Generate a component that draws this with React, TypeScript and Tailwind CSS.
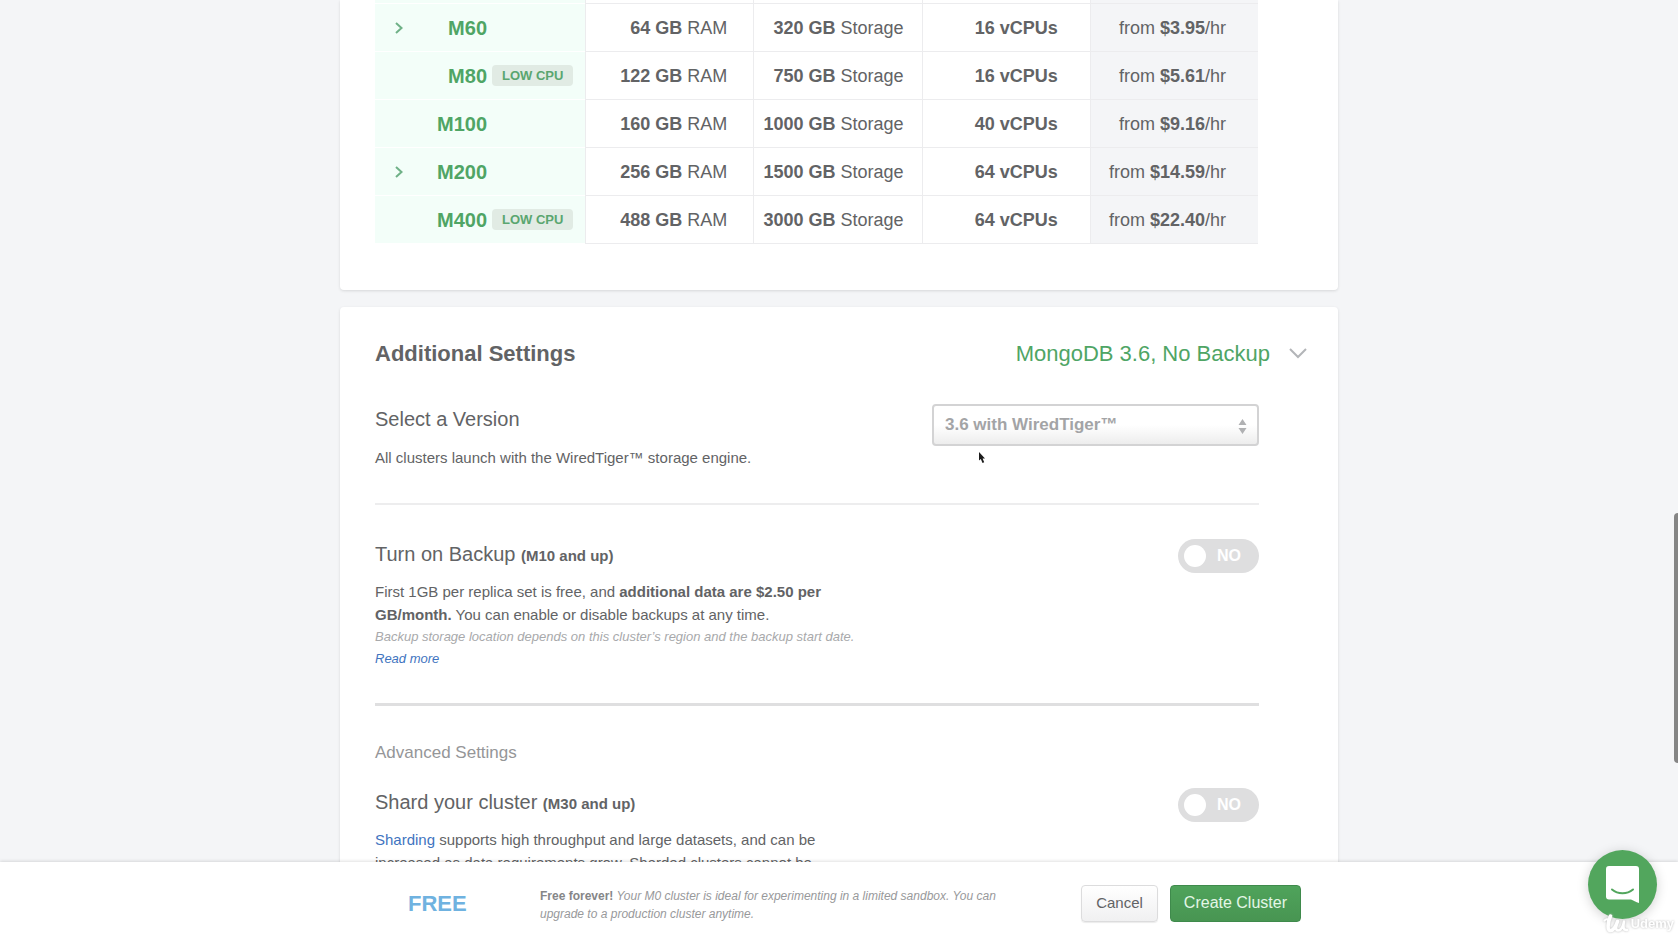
import type { ReactNode } from 'react';

type Tier = {
  name: string;
  expandable?: boolean;
  lowCpu?: boolean;
  ram: string;
  storage: string;
  cpus: string;
  price: string;
};

const tiers: Tier[] = [
  { name: 'M60', expandable: true, ram: '64 GB', storage: '320 GB', cpus: '16 vCPUs', price: '$3.95' },
  { name: 'M80', lowCpu: true, ram: '122 GB', storage: '750 GB', cpus: '16 vCPUs', price: '$5.61' },
  { name: 'M100', ram: '160 GB', storage: '1000 GB', cpus: '40 vCPUs', price: '$9.16' },
  { name: 'M200', expandable: true, ram: '256 GB', storage: '1500 GB', cpus: '64 vCPUs', price: '$14.59' },
  { name: 'M400', lowCpu: true, ram: '488 GB', storage: '3000 GB', cpus: '64 vCPUs', price: '$22.40' },
];

function TierRow({ tier }: { tier: Tier }) {
  return (
    <tr className="h-12">
      <th scope="row" className="border-b border-white bg-[#f3fef9] p-0 font-bold">
        <div className="flex items-center">
          <span className="flex w-10 justify-end pr-3">
            {tier.expandable && (
              <button type="button" aria-label={`Expand ${tier.name}`} className="block">
                <svg width="8" height="12" viewBox="0 0 8 12" fill="none" stroke="#6fb187" strokeWidth="2">
                  <path d="M1 1l5.5 5L1 11" />
                </svg>
              </button>
            )}
          </span>
          <span className="w-18 text-right text-xl leading-6 text-[#4fa565]">{tier.name}</span>
          {tier.lowCpu && (
            <span className="ml-[5px] rounded-sm bg-[#e1ebe4] px-[10px] text-[13px] leading-[21px] text-[#5aa670]">
              LOW CPU
            </span>
          )}
        </div>
      </th>
      <td className="border-b border-l border-[#ececee] p-0 pr-[26px]">
        <b>{tier.ram}</b> RAM
      </td>
      <td className="border-b border-l border-[#ececee] p-0 pr-[18px]">
        <b>{tier.storage}</b> Storage
      </td>
      <td className="border-b border-l border-[#ececee] p-0 pr-8">
        <b>{tier.cpus}</b>
      </td>
      <td className="border-b border-l border-[#ececee] bg-[#f4f5f7] p-0 pr-8">
        from <b>{tier.price}</b>/hr
      </td>
    </tr>
  );
}

function Toggle({ id }: { id: string }) {
  return (
    <span className="relative flex h-[34px] w-[81px] shrink-0 items-center rounded-full bg-[#dededf] px-[6px]">
      <input id={id} type="checkbox" role="switch" className="absolute inset-0 cursor-pointer opacity-0" />
      <span className="size-[22px] rounded-full bg-white" />
      <span className="ml-[11px] text-base font-bold text-white">NO</span>
    </span>
  );
}

function SettingHeading({ id, title, note }: { id: string; title: string; note: string }) {
  return (
    <label htmlFor={id} className="block text-xl leading-6">
      {title} <b className="text-[15px]">{note}</b>
    </label>
  );
}

function Link({ children }: { children: ReactNode }) {
  return (
    <a href="#" className="text-[#3f74c0]">
      {children}
    </a>
  );
}

export default function App() {
  return (
    <div className="flex h-screen flex-col overflow-hidden bg-[#f4f5f7] font-['Liberation_Sans',Arial,sans-serif] text-[#626365]">
      <main className="min-h-0 flex-1 overflow-hidden">
        <div className="mx-auto flex max-w-[998px] flex-col gap-[17px]">
          <section className="rounded-b-sm bg-white pr-20 pb-[46px] pl-[35px] shadow-[0_1px_3px_rgba(0,0,0,0.12)]">
            <table className="w-full table-fixed border-separate border-spacing-0 text-right text-lg leading-6">
              <colgroup>
                <col className="w-[210px]" />
                <col />
                <col />
                <col />
                <col />
              </colgroup>
              <thead aria-hidden="true">
                <tr className="h-1">
                  <td className="border-b border-white bg-[#f3fef9] p-0" />
                  <td className="border-b border-l border-[#ececee] p-0" />
                  <td className="border-b border-l border-[#ececee] p-0" />
                  <td className="border-b border-l border-[#ececee] p-0" />
                  <td className="border-b border-l border-[#ececee] bg-[#f4f5f7] p-0" />
                </tr>
              </thead>
              <tbody>
                {tiers.map((tier) => (
                  <TierRow key={tier.name} tier={tier} />
                ))}
              </tbody>
            </table>
          </section>

          <section className="rounded-t-sm bg-white pt-[33px] pb-16 shadow-[0_1px_3px_rgba(0,0,0,0.12)]">
            <header className="flex items-center justify-between pr-[31px] pl-[35px] leading-7">
              <h2 className="text-[22px] font-bold">Additional Settings</h2>
              <button type="button" className="flex items-center gap-[19px] text-[22px] text-[#4fa565]">
                MongoDB 3.6, No Backup
                <svg width="18" height="12" viewBox="0 0 18 12" fill="none" stroke="#b3b5b8" strokeWidth="2">
                  <path d="M1 1l8 8 8-8" />
                </svg>
              </button>
            </header>

            <div className="pr-[79px] pl-[35px]">
              <div className="flex justify-between border-b-2 border-[#ededee] pt-9 pb-[34px]">
                <div className="pt-[3px]">
                  <label htmlFor="version" className="block text-xl leading-6">
                    Select a Version
                  </label>
                  <p className="mt-[15px] text-[15px] leading-[23px]">
                    All clusters launch with the WiredTiger™ storage engine.
                  </p>
                </div>
                <div className="relative h-[42px] w-[327px]">
                  <select
                    id="version"
                    className="h-full w-full appearance-none rounded border-2 border-[#d3d3d4] bg-linear-to-b from-white from-50% to-[#ededed] pl-[11px] text-[17px] font-bold text-[#a3a4a6]"
                  >
                    <option>3.6 with WiredTiger™</option>
                  </select>
                  <svg className="pointer-events-none absolute top-[15px] right-3 fill-[#b0b1b3]" width="9" height="15" viewBox="0 0 9 15">
                    <path d="M4.500 0l4 6H.5zM4.500 15l-4-6h8z" />
                  </svg>
                  <svg className="pointer-events-none absolute top-12 left-[47px]" width="7" height="12" viewBox="0 0 7 12">
                    <path d="M0 0v8.500l1.800-1.400 1.700 4 1.700-.8-1.600-3.700H6z" fill="#1c1c1c" />
                  </svg>
                </div>
              </div>

              <div className="flex justify-between border-b-[3px] border-[#dfdfe0] pt-[34px] pb-[33px]">
                <div className="max-w-[500px] pt-[3px]">
                  <SettingHeading id="backup" title="Turn on Backup" note="(M10 and up)" />
                  <p className="mt-3 max-w-[470px] text-[15px] leading-[23px]">
                    First 1GB per replica set is free, and <b>additional data are $2.50 per GB/month.</b> You can
                    enable or disable backups at any time.
                  </p>
                  <p className="text-[13px] leading-[22px] text-[#a8a9ab] italic">
                    Backup storage location depends on this cluster’s region and the backup start date.
                    <br />
                    <Link>Read more</Link>
                  </p>
                </div>
                <Toggle id="backup" />
              </div>

              <h3 className="pt-[35px] text-[17px] leading-6 text-[#959698]">Advanced Settings</h3>

              <div className="flex justify-between pt-[23px]">
                <div className="max-w-[470px] pt-0.5">
                  <SettingHeading id="shard" title="Shard your cluster" note="(M30 and up)" />
                  <p className="mt-3 text-[15px] leading-[23px]">
                    <Link>Sharding</Link> supports high throughput and large datasets, and can be
                    <br />
                    increased as data requirements grow. Sharded clusters cannot be
                  </p>
                </div>
                <Toggle id="shard" />
              </div>
            </div>
          </section>
        </div>
      </main>

      <footer className="z-10 flex h-[78px] shrink-0 justify-center bg-white shadow-[0_-1px_3px_rgba(0,0,0,0.12)]">
        <div className="flex w-full max-w-[1000px] items-center pt-1 pr-[38px] pl-[69px]">
          <strong className="w-33 text-[22px] text-[#6fb2e0]">FREE</strong>
          <p className="w-[500px] pt-1 text-[12px] leading-[18px] text-[#98999b] italic">
            <b className="text-[#858688] not-italic">Free forever!</b> Your M0 cluster is ideal for experimenting in a
            limited sandbox. You can
            <br />
            upgrade to a production cluster anytime.
          </p>
          <div className="ml-auto flex gap-3">
            <button
              type="button"
              className="h-[37px] rounded-sm border border-[#dcdcdd] bg-linear-to-b from-white to-[#f0f0f1] px-[14px] text-[15px] whitespace-nowrap shadow-[0_1px_1px_rgba(0,0,0,0.08)]"
            >
              Cancel
            </button>
            <button
              type="button"
              className="h-[37px] rounded-sm border border-[#3f8a4c] bg-linear-to-b from-[#4fa35b] to-[#489552] px-[13px] text-base whitespace-nowrap text-[#e3f6e6]"
            >
              Create Cluster
            </button>
          </div>
        </div>
      </footer>

      <button
        type="button"
        aria-label="Open chat"
        className="fixed right-[21px] bottom-[21px] z-20 flex size-[69px] items-center justify-center rounded-full bg-[#52a65d] shadow-[0_2px_12px_rgba(0,0,0,0.18)]"
      >
        <svg width="33" height="37" viewBox="0 0 33 37" fill="none">
          <path d="M3 0h27a3 3 0 0 1 3 3v34c-3-1-6-2.500-8-3.500H3a3 3 0 0 1-3-3V3a3 3 0 0 1 3-3z" fill="#fff" />
          <path d="M6 23.500c6 5 15 5 21 0" stroke="#52a65d" strokeWidth="2" strokeLinecap="round" />
        </svg>
      </button>

      <div className="pointer-events-none fixed right-1 bottom-1.5 z-30 flex items-center gap-0.5 text-[13px] leading-5 font-bold text-white drop-shadow-[0_0_1px_#bbbbbb]">
        <svg width="26" height="20" viewBox="0 0 26 20" fill="none" stroke="#fff" strokeLinecap="round" strokeLinejoin="round">
          <path d="M1.500 6.500c2-2 4-1.500 3.500 1" strokeWidth="2" />
          <path d="M7.500 2C5 8 4 16 7 16.500c3 .5 6-4 7.500-9" strokeWidth="3.500" />
          <path d="M14.500 7.500c-2 5-2 9 .5 9 3 0 5-4 6-9-1 5-1 9 3 8.500" strokeWidth="2.500" />
        </svg>
        Udemy
      </div>

      <div className="fixed top-[513px] right-0 z-20 h-[250px] w-1 rounded-l-sm bg-[#858585]" />
    </div>
  );
}
